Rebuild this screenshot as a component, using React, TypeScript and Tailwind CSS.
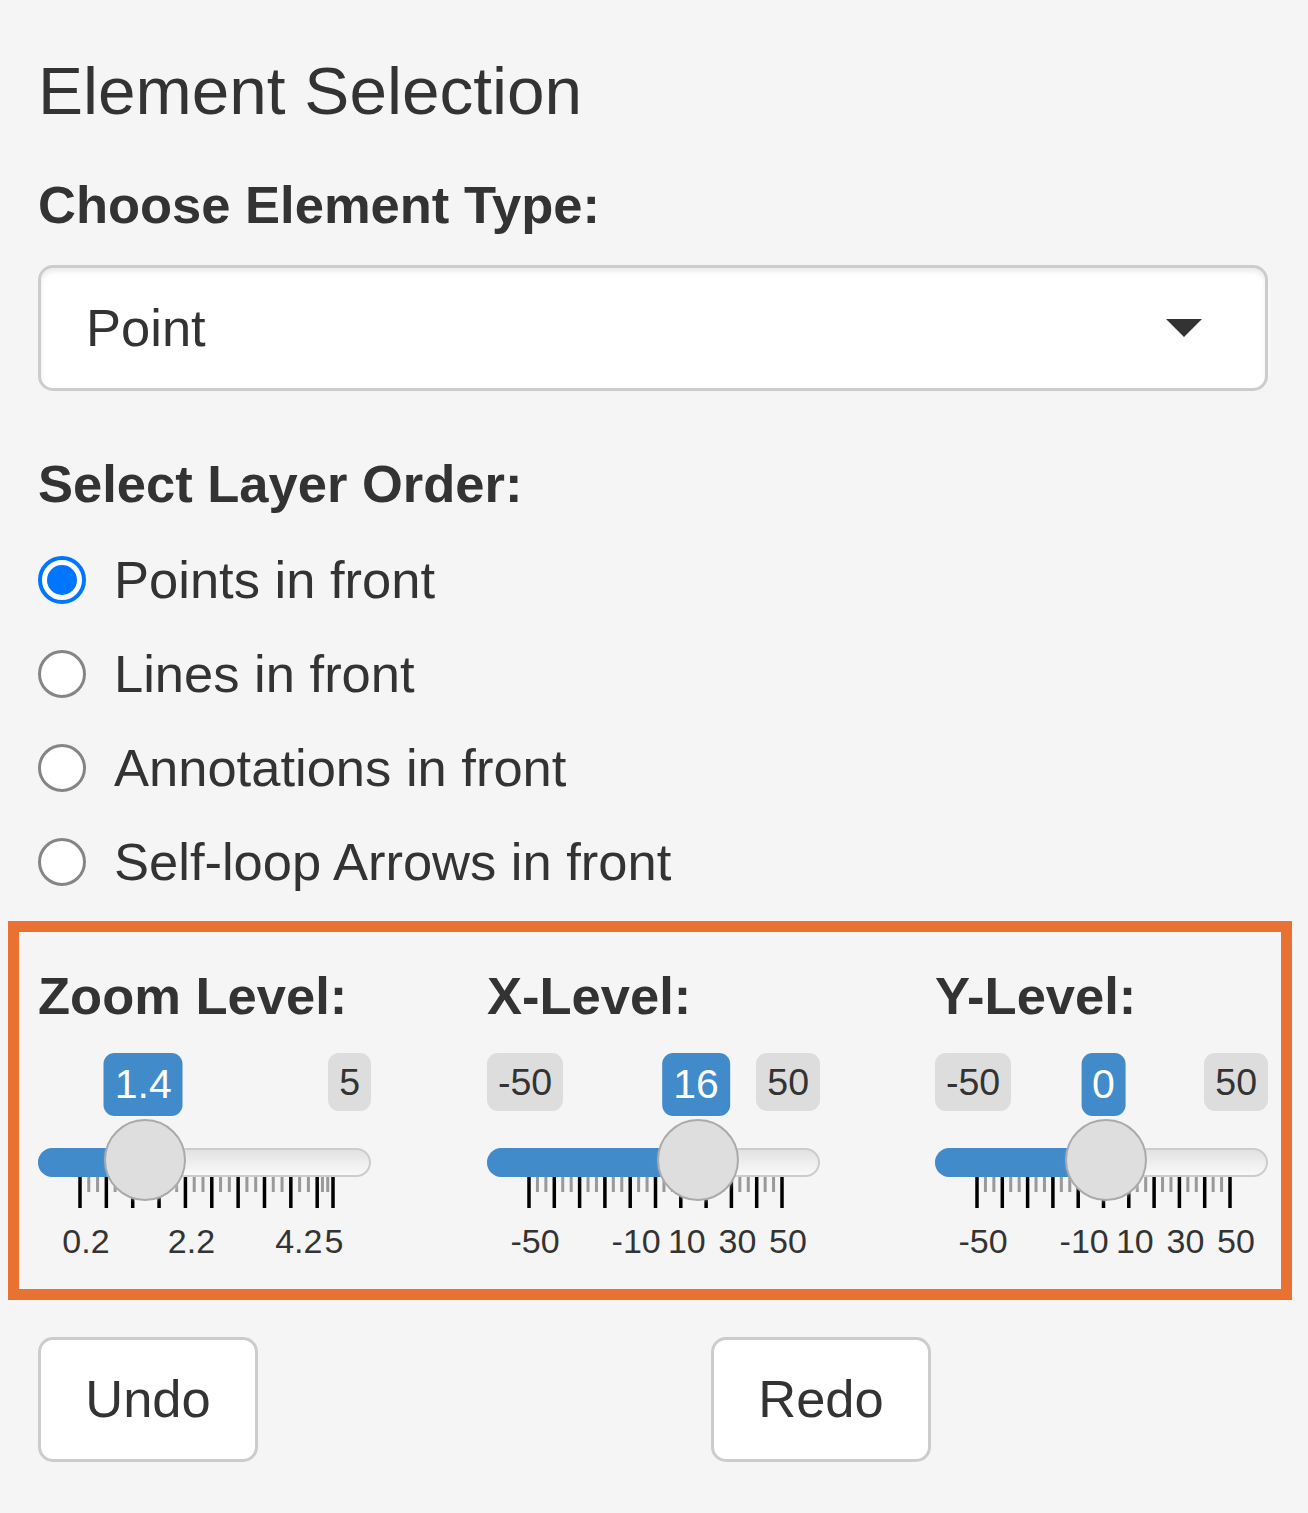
import React from "react";

type GridLabel = { value: number; text: string; shift?: number };

type SliderSpec = {
  label: string;
  min: number;
  max: number;
  value: number;
  display: string;
  ticks: number[];
  gridLabels: GridLabel[];
  showMin: boolean;
};

// px from the left edge of the 333px track
function pos(s: SliderSpec, v: number) {
  return 42 + ((v - s.min) / (s.max - s.min)) * 253;
}

const stepTicks = (from: number, step: number, count: number) =>
  Array.from({ length: count }, (_, i) => Math.round((from + step * i) * 100) / 100);

const sliders: SliderSpec[] = [
  {
    label: "Zoom Level:",
    min: 0.2,
    max: 5,
    value: 1.4,
    display: "1.4",
    ticks: [...stepTicks(0.2, 0.5, 10), 5],
    gridLabels: [
      { value: 0.2, text: "0.2" },
      { value: 2.2, text: "2.2" },
      { value: 4.2, text: "4.2", shift: 8 },
      { value: 5, text: "5", shift: 1 },
    ],
    showMin: false,
  },
  {
    label: "X-Level:",
    min: -50,
    max: 50,
    value: 16,
    display: "16",
    ticks: stepTicks(-50, 10, 11),
    gridLabels: [
      { value: -50, text: "-50" },
      { value: -10, text: "-10" },
      { value: 10, text: "10" },
      { value: 30, text: "30" },
      { value: 50, text: "50" },
    ],
    showMin: true,
  },
  {
    label: "Y-Level:",
    min: -50,
    max: 50,
    value: 0,
    display: "0",
    ticks: stepTicks(-50, 10, 11),
    gridLabels: [
      { value: -50, text: "-50" },
      { value: -10, text: "-10" },
      { value: 10, text: "10" },
      { value: 30, text: "30" },
      { value: 50, text: "50" },
    ],
    showMin: true,
  },
];

const minMaxCls =
  "rounded-[11px] bg-[#dddddd] px-[11px] py-[4px] text-[37.5px] leading-[50px] text-[#333]";

function RangeSlider({ s }: { s: SliderSpec }) {
  const handleX = pos(s, s.value);
  const minors: number[] = [];
  for (let i = 0; i < s.ticks.length - 1; i++) {
    const a = pos(s, s.ticks[i]);
    const b = pos(s, s.ticks[i + 1]);
    minors.push(a + (b - a) / 3, a + ((b - a) * 2) / 3);
  }

  return (
    <div className="w-[333px]">
      <div className="relative flex h-[63px] items-start justify-between">
        {s.showMin ? <span className={minMaxCls}>{s.min}</span> : <span />}
        <span className={minMaxCls}>{s.max}</span>
        <span
          className="absolute top-0 -translate-x-1/2 rounded-[11px] bg-[#428bca] px-[11px] py-[4px] text-[41px] leading-[55px] text-white"
          style={{ left: handleX }}
        >
          {s.display}
        </span>
      </div>

      <div className="relative mt-[32px] h-[29px] rounded-full border-2 border-[#cccccc] bg-linear-to-b from-[#e2e2e2] to-[#f9f9f9]">
        <div
          className="absolute -top-[2px] -bottom-[2px] -left-[2px] rounded-l-full bg-[#428bca]"
          style={{ width: handleX }}
        />
        <div
          className="absolute -top-[31px] z-10 h-[82px] w-[82px] -translate-x-1/2 rounded-full border-2 border-[#aaaaaa] bg-[#dedede] shadow-[1px_1px_3px_rgba(255,255,255,0.3)]"
          style={{ left: handleX }}
        />
      </div>

      <div className="relative h-[83px]">
        <svg className="absolute left-0 top-0" width={333} height={31}>
          {minors.map((x, i) => (
            <rect key={"m" + i} x={x - 1.5} y={0} width={3} height={15} fill="#999999" />
          ))}
          {s.ticks.map((t) => (
            <rect key={"t" + t} x={pos(s, t) - 1.75} y={0} width={3.5} height={31} fill="#000000" />
          ))}
        </svg>
        {s.gridLabels.map((g) => (
          <span
            key={g.text}
            className="absolute top-[45px] -translate-x-1/2 whitespace-nowrap text-[34px] leading-[38px] text-[#333]"
            style={{ left: pos(s, g.value) + (g.shift ?? 6) }}
          >
            {g.text}
          </span>
        ))}
      </div>
    </div>
  );
}

function Radio({ checked, label }: { checked: boolean; label: string }) {
  return (
    <div className="flex h-[94px] items-center gap-[28px]">
      {checked ? (
        <span className="flex h-[48px] w-[48px] items-center justify-center rounded-full border-[4px] border-[#0075ff] bg-white">
          <span className="h-[30px] w-[30px] rounded-full bg-[#0075ff]" />
        </span>
      ) : (
        <span className="h-[48px] w-[48px] rounded-full border-[3px] border-[#858585] bg-white" />
      )}
      <span className="text-[52.5px] leading-[60px]">{label}</span>
    </div>
  );
}

const layerOptions = [
  "Points in front",
  "Lines in front",
  "Annotations in front",
  "Self-loop Arrows in front",
];

export default function App() {
  return (
    <div
      className="min-h-[1513px] w-[1308px] bg-[#f5f5f5] pl-[38px] pr-[40px] text-[#333]"
      style={{ fontFamily: '"Liberation Sans", Arial, Helvetica, sans-serif' }}
    >
      <h4 className="pt-[53px] text-[67.5px] leading-[76px] font-normal">Element Selection</h4>

      <label className="mt-[46px] block text-[52.5px] leading-[60px] font-bold">
        Choose Element Type:
      </label>
      <div className="mt-[30px] flex h-[126px] items-center justify-between rounded-[15px] border-[3px] border-[#cccccc] bg-white pl-[45px] pr-[63px] shadow-[inset_0_4px_4px_rgba(0,0,0,0.075)]">
        <span className="text-[52.5px] leading-[60px]">Point</span>
        <svg width="36" height="18" viewBox="0 0 36 18">
          <polygon points="0,0 36,0 18,18" fill="#333333" />
        </svg>
      </div>

      <label className="mt-[63px] block text-[52.5px] leading-[60px] font-bold">
        Select Layer Order:
      </label>
      <div className="mt-[19px]">
        {layerOptions.map((opt, i) => (
          <Radio key={opt} checked={i === 0} label={opt} />
        ))}
      </div>

      <div className="-ml-[30px] -mr-[24px] mt-[12px] border-[11px] border-[#e97132] pb-[29px] pl-[19px] pt-[34px]">
        <div className="grid grid-cols-[449px_448px_1fr]">
          {sliders.map((s) => (
            <div key={s.label}>
              <div className="text-[52.5px] leading-[60px] font-bold">{s.label}</div>
              <div className="mt-[27px]">
                <RangeSlider s={s} />
              </div>
            </div>
          ))}
        </div>
      </div>

      <div className="mt-[37px] flex gap-[453px]">
        <button className="h-[125px] w-[220px] rounded-[15px] border-[3px] border-[#cccccc] bg-white text-[52.5px] text-[#333]">
          Undo
        </button>
        <button className="h-[125px] w-[220px] rounded-[15px] border-[3px] border-[#cccccc] bg-white text-[52.5px] text-[#333]">
          Redo
        </button>
      </div>
    </div>
  );
}
